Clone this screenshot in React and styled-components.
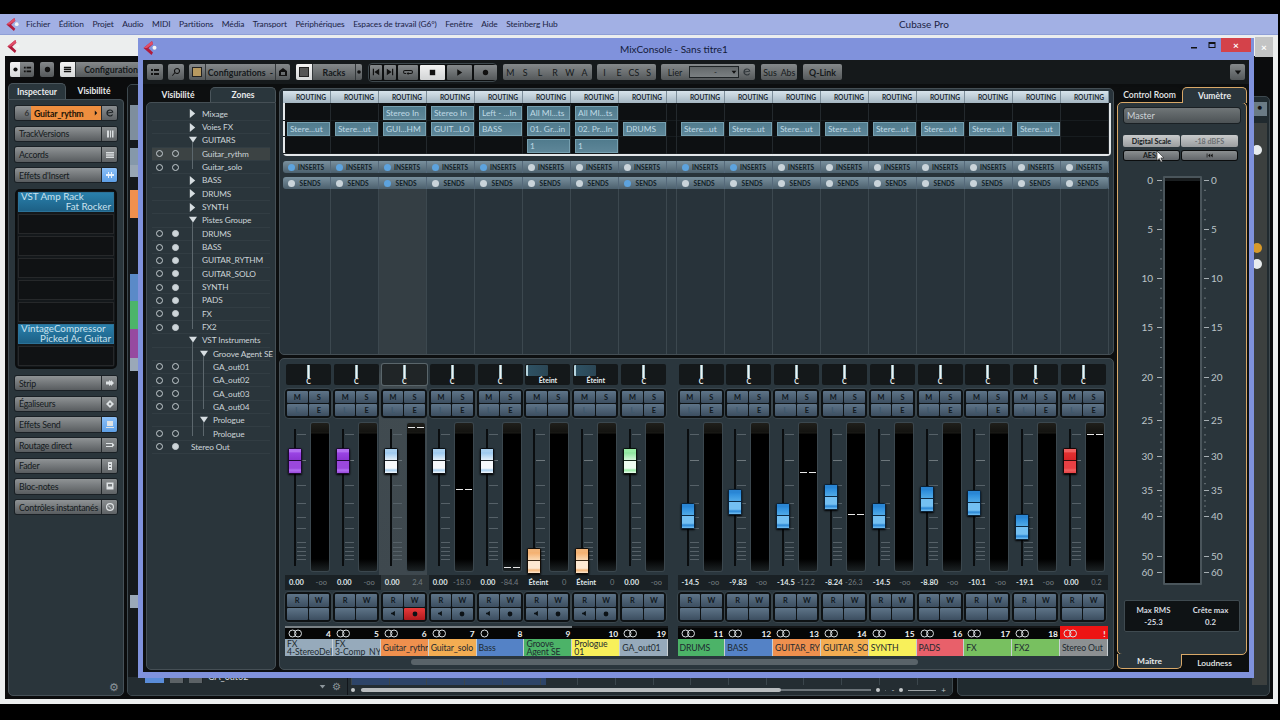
import React from "react";
import styled, { createGlobalStyle } from "styled-components";

const Global = createGlobalStyle`
  html, body { margin: 0; padding: 0; background: #000; }
  body { font-family: "Lato", "Open Sans", sans-serif; overflow: hidden; }
  * { box-sizing: border-box; }
`;

const Desktop = styled.div`position: relative; width: 1280px; height: 720px; background: #000; overflow: hidden;`;

/* ---------- icons ---------- */
const Logo = ({ size = 16 }) => (
  <svg width={size} height={size} viewBox="0 0 16 16">
    <path d="M10 1 L1.5 8 L9.5 15 L11 12.5 L6.5 8.2 L11 4 Z" fill="#b01b3c" />
    <path d="M10 1 L1.5 8 L5 8 L11 4 Z" fill="#e0506a" />
    <circle cx="12.5" cy="7.7" r="2" fill="#f4f4f4" />
  </svg>
);
const Glyph = ({ d, w = 10, h = 10, color = "#111", sw = 0, fill }) => (
  <svg width={w} height={h} viewBox="0 0 10 10">
    <path d={d} fill={fill === undefined ? color : fill} stroke={sw ? color : "none"} strokeWidth={sw} />
  </svg>
);
const G = {
  list: "M1 2h2v2H1zM4 2h5v2H4zM1 6h2v2H1zM4 6h5v2H4z",
  prev: "M1 1h1.5v8H1zM9 1v8L3 5z",
  next: "M9 1H7.5v8H9zM1 1v8l6-4z",
  stop: "M2 2h6v6H2z",
  play: "M2.5 1.5v7L8 5z",
  rec: "M5 2a3 3 0 1 0 0 6a3 3 0 1 0 0-6z",
  speaker: "M7 1.5v7L3 6H1.5V4H3z",
  down: "M1 3h8L5 8z",
  right: "M3 1v8l4-4z",
  lines: "M1 2h8v1.5H1zM1 4.3h8v1.5H1zM1 6.6h8v1.5H1z",
  note: "M1.5 1.5h7v7h-7zM3 3v2.5h4V3z",
  arrow: "M1 3h6v1H1zM1 6h6v1H1zM7 2.5 9.5 5 7 7.5z",
};
const LinkMark = ({ single, color = "#d8dde0" }) => (
  <svg width="16" height="9" viewBox="0 0 16 9">
    <circle cx="4.5" cy="4.5" r="3.5" fill="none" stroke={color} strokeWidth="1" />
    {!single && <circle cx="10" cy="4.5" r="3.5" fill="none" stroke={color} strokeWidth="1" />}
  </svg>
);

/* ---------- main Cubase window (behind) ---------- */
const MainWindow = styled.div`
  position: absolute; left: 0; top: 14px; width: 1278px; height: 690px;
  display: flex; flex-direction: column; background: #eceeee;
`;
const MenuBar = styled.div`
  height: 21px; background: #a2b0e4; display: flex; align-items: center; padding-left: 5px;
  color: #1b2344; font-size: 8.4px; letter-spacing: -0.1px; border-bottom: 1px solid #8f9fd6; white-space: nowrap; flex: none;
`;
const MenuItems = styled.div`display: flex; gap: 8.55px; margin-left: 6px; flex: none; width: 600px;`;
const AppTitle = styled.div`margin-left: 273px; font-size: 10px; letter-spacing: 0; color: #1b2344;`;
const TitleRow = styled.div`
  height: 21px; padding: 2px 0 0 6px; display: flex; align-items: center; justify-content: flex-end; position: relative; flex: none;
  & > :first-child { margin-right: auto; }
`;
const GrayClose = styled.div`
  width: 18px; height: 20px; background: #c3c4c4; color: #fff; font-size: 10px; font-weight: 700;
  display: flex; align-items: center; margin-right: 5px; justify-content: center;
`;
const WindowBody = styled.div`
  flex: 1; margin: 0 5px 5px 5px; background: #0b0c0d; display: flex; flex-direction: column; padding: 0 3px 3px 3px; min-height: 0;
`;
const MainToolbar = styled.div`
  height: 27px; display: flex; align-items: center; gap: 6px; padding-left: 2px; flex: none;
`;
const MainColumns = styled.div`flex: 1; display: flex; gap: 3px; min-height: 0;`;
const InspectorCol = styled.div`width: 116px; flex: none; display: flex; flex-direction: column;`;
const OuterTabs = styled.div`display: flex; height: ${p => p.$h}px; flex: none;`;
const OuterTab = styled.div`
  width: ${p => p.$w}px; display: flex; align-items: center; justify-content: center;
  font-size: 8.5px; font-weight: 700; color: #e8eaeb; border-radius: 5px 5px 0 0;
  background: ${p => (p.$on ? "#2a363c" : "transparent")};
  border: ${p => (p.$on ? "1px solid #4a555b" : "none")}; border-bottom: none;
`;
const InspectorPanel = styled.div`
  flex: 1; background: #2a353b; border: 1px solid #465158; border-radius: 0 4px 5px 5px;
  padding: 6px 6px 5px; display: flex; flex-direction: column; position: relative;
`;
const InspRow = styled.div`
  height: 14.4px; margin-bottom: ${p => p.$gap ?? 6.27}px; display: flex; border-radius: 2px; overflow: hidden; flex: none;
  background: linear-gradient(#8f9395, #585c5f); box-shadow: 0 0 0 1px #1a2025;
  font-size: 8.8px; letter-spacing: -0.22px; color: #141a1d; align-items: stretch;
`;
const InspLabel = styled.div`flex: 1; padding-left: 4px; display: flex; align-items: center; white-space: nowrap; min-width: 0;`;
const InspIcon = styled.div`
  width: 16px; flex: none; border-left: 1px solid #24292c; display: flex; align-items: center; justify-content: center;
  background: ${p => (p.$on ? "linear-gradient(#8cc0f8,#5d9fe6)" : "linear-gradient(#8a8e90,#5e6265)")};
`;
const TrackNum = styled.div`width: 16px; font-size: 8px; font-weight: 700; display: flex; align-items: center; justify-content: flex-end; padding-right: 2px; color: #333;`;
const TrackName = styled.div`
  flex: 1; background: #ee8e3f; font-weight: 700; display: flex; align-items: center; justify-content: space-between; padding: 0 2px 0 3px; color: #1c1206;
`;
const Slots = styled.div`
  margin: 8.6px 2px 9px; background: #14181b; border-radius: 3px; padding: 1px; display: flex; flex-direction: column; gap: 2px; flex: none; box-shadow: 0 0 0 2px #0b0d0e;
`;
const Slot = styled.div`
  height: 20px; display: flex; flex-direction: column; padding: 0 3px; font-size: 9.8px; line-height: 9.8px; color: #c9e2ef; justify-content: center;
  background: ${p => (p.$on ? "linear-gradient(#2a81ad,#1c5f84)" : "#101214")};
  box-shadow: inset 0 0 0 1px ${p => (p.$on ? "#2c7298" : "#26282a")};
  & > span:last-child { text-align: right; }
`;
const GearWrap = styled.div`position: absolute; right: 4px; bottom: 3px; color: #8a9399; font-size: 11px; line-height: 11px;`;

const ProjectPanel = styled.div`
  width: 826px; flex: none; background: #20292e; border-radius: 5px; border: 1px solid #3e494f; display: flex; flex-direction: column; overflow: hidden; margin-top: 1px;
`;
const ProjectMain = styled.div`flex: 1; min-height: 0; background: #15191c; display: flex; flex-direction: column; padding: 20px 0 0 2px;`;
const Lane = styled.div`
  width: 8px; height: ${p => p.$h}px; flex: none; background: ${p => p.$c || "transparent"};
`;
const ProjectFooter = styled.div`height: 18px; flex: none; background: #242d32; display: flex; align-items: center;`;
const FooterTools = styled.div`width: 220px; flex: none; display: flex; align-items: center; gap: 6px; color: #8d969b; padding-right: 6px; font-size: 10px; border-right: 1px solid #11151a; height: 100%;`;
const TrackStub = styled.div`display: flex; align-items: flex-start; gap: 6px; margin: 0 auto 0 17px; height: 100%; overflow: hidden;`;
const StubBlue = styled.div`width: 19px; height: 6px; background: #5a8cd8; display: flex; align-items: flex-end; justify-content: center;`;
const StubBtn = styled.div`width: 13px; height: 6px; background: #5c6266; box-shadow: 1px 0 0 #1e2428;`;
const StubText = styled.div`font-size: 9px; line-height: 9px; color: #d6dadc; margin-top: -5px; white-space: nowrap;`;
const FooterRight = styled.div`flex: 1; min-width: 0; display: flex; flex-direction: column; height: 100%; padding: 0 6px 0 3px; overflow: hidden;`;
const Ruler = styled.div`
  height: 9px; margin-top: -1px; flex: none;
  background:
    repeating-linear-gradient(90deg, #3b464c 0 1px, transparent 1px 37.7px),
    linear-gradient(90deg, #2d4468 0 195px, transparent 195px);
`;
const ScrollRow = styled.div`flex: 1; display: flex; align-items: center; gap: 5px; color: #c0c6c9; font-size: 8px;`;
const ScrollTrack = styled.div`width: 510px; height: 2px; background: #6b7378; position: relative; margin-left: 1px; flex: none;`;
const ScrollThumb = styled.div`position: absolute; left: 0; top: -1px; width: 420px; height: 4px; background: #b8bcbe; border-radius: 2px;`;
const ZoomTrack = styled.div`width: 28px; height: 1px; background: #9da3a6; flex: none;`;
const SmallDot = styled.span`width: 4px; height: 4px; background: #c4c8ca; border-radius: 50%; display: inline-block; flex: none;`;
const SidePanel = styled.div`
  flex: 1; background: #202a2f; border: 1px solid #3e494f; border-radius: 5px; display: flex; flex-direction: column; align-items: flex-end; padding: 5px 2px 0 0; margin-top: 13px; margin-left: 1px;
`;
const SideBtn = styled.div`width: 14px; height: 14px; background: #6b7b85; margin-bottom: 7px; color: #111; font-size: 8px; text-align: center; flex: none;`;
const SideLane = styled.div`width: 15px; flex: 1; background: #3c403f; display: flex; flex-direction: column; align-items: flex-start; padding-top: 22px; margin-bottom: 10px;`;
const SideKnob = styled.div`
  width: 10px; height: 10px; border-radius: 50%; background: ${p => p.$c}; margin-top: ${p => p.$mt}px; flex: none;
`;

/* ---------- MixConsole window ---------- */
const MixWindow = styled.div`
  position: absolute; left: 138px; top: 38px; width: 1116px; height: 640px;
  background: #8092dc; display: flex; flex-direction: column;
`;
const MixTitle = styled.div`
  height: 22px; flex: none; display: flex; align-items: center; position: relative; padding-left: 482px;
  color: #131a3a; font-size: 10px;
`;
const MixLogo = styled.div`position: absolute; left: 4px; top: 2px;`;
const WinButtons = styled.div`position: absolute; right: 3px; top: 0; height: 14px; display: flex; align-items: center; color: #151c3c;`;
const WinGlyph = styled.div`width: 18px; display: flex; justify-content: center; align-items: center;`;
const CloseBtn = styled.div`
  width: 30px; height: 14px; background: #d4424a; color: #fff; font-size: 10px; font-weight: 700; display: flex; align-items: center; justify-content: center;
`;
const MixInner = styled.div`
  flex: 1; margin: 0 5px 6px; background: #0d0f10; display: flex; flex-direction: column; min-height: 0;
`;
const Toolbar = styled.div`height: 27px; flex: none; display: flex; align-items: flex-start; padding: 4px 4px 0 4px; background: #15191b; box-shadow: inset 0 -3px 0 #0c0e0f;`;
const ToolGroup = styled.div`
  height: ${p => p.$h || 16}px; width: ${p => p.$w}px; margin-left: ${p => p.$ml || 0}px; flex: none; display: flex; align-items: stretch; border-radius: 2px; overflow: hidden;
  background: linear-gradient(#85898b, #54585a); font-size: 8.8px; color: #15191b;
`;
const ToolCell = styled.div`
  width: ${p => (p.$w ? `${p.$w}px` : "auto")}; flex: ${p => (p.$w ? "none" : 1)}; display: flex; align-items: center; justify-content: center;
  font-weight: ${p => (p.$b ? 700 : 400)}; white-space: nowrap;
  background: ${p => (p.$light ? "linear-gradient(#f4f4f4,#d6d8d9)" : "transparent")};
  border-left: ${p => (p.$sep ? "1px solid #33383a" : "none")};
`;
const Swatch = styled.div`width: 10px; height: 10px; border: 1px solid #222; background: ${p => p.$c};`;
const TransportFrame = styled.div`
  width: 129px; margin-left: 6px; height: 19px; margin-top: -1.5px; flex: none; display: flex; gap: 2px; align-items: center; border: 1px solid #3e484d; border-radius: 4px; padding: 0 1px; background: #0d0f10;
`;
const TransBtn = styled.div`
  width: ${p => p.$w}px; height: 15px; display: flex; align-items: center; justify-content: center; flex: none;
  background: ${p => (p.$light ? "linear-gradient(#f2f2f2,#d2d4d5)" : "linear-gradient(#85898b,#54585a)")}; border-radius: 1px;
`;
const LierSelect = styled.div`
  width: 50px; flex: none; margin: 2px 0; border: 1px solid #1e2325; background: linear-gradient(#63686a,#7b8082); display: flex; align-items: center; justify-content: flex-end; padding-right: 1px; gap: 14px; font-size: 8px;
`;
const MixColumns = styled.div`
  flex: 1; display: flex; padding: 0 2px 2px 3px; gap: 3px; min-height: 0;
`;
const TreeCol = styled.div`width: 130px; flex: none; display: flex; flex-direction: column;`;
const TreePanel = styled.div`
  flex: 1; background: #2a353b; border: 1px solid #454f55; border-radius: 0 0 5px 5px; border-top-left-radius: 5px; padding: 4.6px 5px 0 5px;
`;
const TreeRow = styled.div`
  height: 13.33px; display: flex; align-items: stretch; font-size: 8.3px; letter-spacing: -0.12px; color: #ccd4d8;
  border-bottom: 1px solid #323d43;
  background: ${p => (p.$sel ? "#3c4344" : "transparent")}; white-space: nowrap;
`;
const DotCell = styled.div`width: 35px; flex: none; display: flex; align-items: center; gap: 9px; padding-left: 4px;`;
const TreeDot = styled.span`
  width: 7px; height: 7px; border-radius: 50%; flex: none;
  border: 1px solid #c4ccd0; background: ${p => (p.$on ? "#cdd5d9" : "transparent")};
`;
const Indent = styled.div`
  width: 11px; flex: none; position: relative; display: flex; align-items: center; justify-content: center;
  &::before { content: ""; display: ${p => (p.$line ? "block" : "none")}; position: absolute; left: 5px; top: ${p => (p.$first ? "8px" : "-1px")}; bottom: ${p => (p.$last ? "4px" : "-1px")}; width: 1px; background: #5c676d; }
`;
const TreeLabel = styled.div`margin-left: 4px; display: flex; align-items: center;`;

const CenterCol = styled.div`width: 835px; flex: none; display: flex; flex-direction: column; gap: 3px; padding-top: 1px;`;
const RackPanel = styled.div`
  height: 267px; flex: none; background: #28333a; border: 1px solid #454f55; border-radius: 5px; padding: 2px 0 0 3px; display: flex; flex-direction: column; overflow: hidden;
`;
const Band = styled.div`
  display: grid; grid-template-columns: repeat(8, 48px) 10px repeat(9, 48px); flex: none;
  height: ${p => p.$h}px; margin-top: ${p => p.$mt || 0}px;
`;
const HeadCell = styled.div`
  background: linear-gradient(#d8e4ec, #a4b6c2); font-size: 6.6px; font-weight: 700; color: #1c2a33; display: flex; align-items: center; justify-content: center; padding-left: 9px;
  border-right: 1px solid #7d8e9a;
`;
const RoutingBody = styled.div`
  flex: none; width: 828px; background: #0d1012; border: 2px solid #e4e8ea; border-top: none; border-radius: 0 0 4px 4px; height: 53px; padding-top: 1px;
  display: flex; flex-direction: column;
`;
const RoutingBand = styled(Band)`height: 16.5px; margin-left: -2px; border-bottom: 1px solid #171c1f;`;
const RoutingCellWrap = styled.div`border-right: 1px solid #23292d; padding: 1.5px 1px 1px 4px;`;
const RoutingCell = styled.div`
  height: 14px; width: 43px; background: linear-gradient(#4f7a8c, #5f8799); box-shadow: inset 0 0 0 1px #76a0b0; color: #bfd9e4; font-size: 8.4px;
  display: flex; align-items: center; padding-left: 3px; white-space: nowrap; overflow: hidden;
`;
const PillBand = styled(Band)`
  background: linear-gradient(#79909e, #4c606d); border-radius: 3px; width: 826px;
`;
const PillCell = styled.div`
  display: flex; align-items: center; gap: 3px; padding-left: 5px; font-size: 6.6px; font-weight: 700; color: #101c24;
  border-right: 1px solid #55697a;
`;
const Led = styled.span`width: 7px; height: 7px; border-radius: 50%; flex: none; background: ${p => (p.$on ? "#5da3de" : "#cad4da")};`;
const RackColumns = styled(Band)`flex: 1; height: auto; margin-top: 0;`;
const RackColumn = styled.div`
  background: ${p => (p.$sel ? "#343e44" : "transparent")}; border-right: 1px solid #3c484f;
`;

const MixerPanel = styled.div`
  flex: 1; background: #2a363d; border: 1px solid #454f55; border-radius: 5px; padding: 4px 0 0 3px; display: flex; flex-direction: column; min-height: 0;
`;
const Strips = styled.div`display: grid; grid-template-columns: repeat(8, 47.9px) 9.4px repeat(9, 47.8px);`;
const Strip = styled.div`display: flex; flex-direction: column; background: ${p => (p.$sel ? "linear-gradient(#2e393f 0, #414b50 6%, #3e484e 100%)" : "transparent")}; background-size: 100% 212px; background-repeat: no-repeat;`;
const PanBox = styled.div`
  height: 21px; margin: 1px 0 0 3px; width: 45px; flex: none; background: ${p => (p.$sel ? "#202527" : "#14181a")}; border-radius: 2px; position: relative; display: flex; flex-direction: column; align-items: center;
  box-shadow: ${p => (p.$sel ? "0 0 0 1px #5a666b" : "none")};
`;
const PanTick = styled.div`width: 3px; height: 13px; margin-top: 1px; background: linear-gradient(90deg, #7fa4ad, #eef4f5 50%, #7fa4ad); flex: none;`;
const PanText = styled.div`font-size: 7px; font-weight: 700; color: #e6ecee; line-height: 7px; margin-top: ${p => p.$mt || 0}px;`;
const PanBar = styled.div`position: absolute; left: 1px; top: 1px; width: 22px; height: 11px; background: linear-gradient(90deg, #b6d4de 0 2px, #2e5264 2px, #2b4655); border-radius: 1px;`;
const BtnBox = styled.div`
  width: 46px; height: ${p => p.$h}px; margin: ${p => p.$mt}px 0 0 2px; flex: none; display: grid; grid-template-columns: 1fr 1fr; grid-template-rows: 1fr 1fr; gap: 1px;
  padding: 2px; background: #0e1214; border-radius: 4px; box-shadow: 0 0 0 1px #3a464d;
`;
const MiniBtn = styled.div`
  background: ${p => (p.$red ? "linear-gradient(#e83a3a,#b01a1e)" : "linear-gradient(#5e7488,#3c4e60)")}; border-radius: 1px; color: ${p => (p.$dim ? "#3f586c" : "#10181e")};
  font-size: 7.4px; font-weight: 700; display: flex; align-items: center; justify-content: center;
`;
const FaderArea = styled.div`height: 152px; margin-top: 3px; flex: none; display: flex; position: relative;`;
const FaderTrack = styled.div`width: 28px; flex: none; position: relative;`;
const Handle = styled.div`
  position: absolute; left: 5px; width: 14px; height: 26px; border-radius: 1.5px;
  border: 1px solid ${p => p.$edge}; box-shadow: 0 1px 2px #000;
  background: linear-gradient(${p => p.$a} 0, ${p => p.$a} 12%, ${p => p.$b} 16%, ${p => p.$c} 48%, ${p => p.$d} 52%, ${p => p.$d} 80%, ${p => p.$a} 88%, ${p => p.$d} 100%);
  &::after { content: ""; position: absolute; left: 0; right: 0; top: 11px; height: 1px; background: ${p => p.$line}; }
`;
const Meter = styled.div`
  width: 18px; margin-top: 2px; height: 148px; flex: none; position: relative; border-radius: 2px; box-shadow: 0 0 0 1px #3b474e;
  background: linear-gradient(#201f1b 0, #131310 9px, #1c1c18 10px, #000 11px, #000 136px, #1c2224 100%);
`;
const Peak = styled.div`
  position: absolute; left: 1px; right: 1px; height: 1px;
  background: linear-gradient(90deg, #e8e8e8 0 45%, transparent 45% 55%, #e8e8e8 55% 100%);
`;
const ValueRow = styled.div`
  height: 15px; margin: 2px -2px 0 2px; flex: none; background: ${p => (p.$sel ? "#2e363a" : "#1a2125")}; display: flex; align-items: center; justify-content: space-between; padding: 0 4px; font-size: 7.5px; white-space: nowrap;
`;
const ValMain = styled.span`font-weight: 700; color: #dfe4e6;`;
const ValPeak = styled.span`color: #737c80; padding-right: 2px;`;
const LabelRow = styled.div`
  height: 13px; margin: 4px -2px 0 2px; flex: none; background: ${p => (p.$red ? "#ee1414" : "#050606")}; display: flex; align-items: center; justify-content: space-between; padding: 0 2px 0 3px;
  border-top: 2px solid ${p => (p.$line ? "#7a8286" : p.$red ? "#ee1414" : "#141618")}; color: #eef1f2; font-size: 8.4px; font-weight: 700;
`;
const NameCell = styled.div`
  height: 17px; margin: 0 -2px 0 2px; flex: none; background: ${p => p.$c}; color: #1e2a30; font-size: 8.7px; letter-spacing: -0.1px; line-height: 8px; padding: ${p => (p.$two ? "1px 0 0 2px" : "0 0 0 2px")};
  display: flex; align-items: ${p => (p.$two ? "flex-start" : "center")}; overflow: hidden; white-space: pre; border-right: 1px solid #c9d0d4;
`;
const HScroll = styled.div`
  height: 6px; width: 507px; margin: 3px 0 0 128px; background: #596369; border-radius: 3px; flex: none;
`;

const RightCol = styled.div`width: 130px; flex: none; display: flex; flex-direction: column;`;
const RTabs = styled.div`display: flex; height: 15px; flex: none; position: relative; z-index: 1;`;
const RTab = styled.div`
  width: 65px; height: ${p => (p.$on ? "16px" : "15px")}; display: flex; align-items: center; justify-content: center; font-size: 8.6px; font-weight: ${p => (p.$on ? 700 : 600)}; color: #e6e9ea;
  background: ${p => (p.$on ? "#2a353b" : "#0d0f10")};
  border: ${p => (p.$on ? "1px solid #d8a868" : "none")}; border-bottom: none; border-radius: 5px 5px 0 0;
`;
const RBottomTabs = styled.div`display: flex; height: 15px; flex: none; position: relative; z-index: 1;`;
const RBottomTab = styled.div`
  width: 65px; height: 15px; margin-top: ${p => (p.$on ? "-1px" : "0")}; display: flex; align-items: center; justify-content: center; font-size: 8.4px; font-weight: ${p => (p.$on ? 700 : 600)}; color: #e6e9ea;
  background: ${p => (p.$on ? "#2a353b" : "#0d0f10")};
  border: ${p => (p.$on ? "1px solid #d8a868" : "none")}; border-top: none; border-radius: 0 0 5px 5px;
`;
const VuPanel = styled.div`
  flex: 1; background: #2a353b; border: 1px solid #d8a868; border-radius: 5px; display: flex; flex-direction: column; padding: 5px 5px 0; position: relative;
`;
const MasterField = styled.div`
  height: 15px; flex: none; margin: 0 1px; border-radius: 3px; background: linear-gradient(#6f7577, #4c5255); box-shadow: 0 0 0 1px #1a2024; color: #cdd3d6; font-size: 9px; display: flex; align-items: center; padding-left: 3px;
`;
const VuBtnRow = styled.div`display: flex; gap: ${p => p.$gap}px; margin-top: ${p => p.$mt}px; height: ${p => p.$h}px; flex: none; margin-left: ${p => p.$ml || 0}px;`;
const VuBtn = styled.div`
  width: ${p => p.$w}px; flex: none; border-radius: 2px; display: flex; align-items: center; justify-content: center; font-size: 7.2px; font-weight: 700;
  background: ${p => (p.$bright ? "linear-gradient(#c8cacb,#9a9d9f)" : "linear-gradient(#8a8e90,#62666a)")};
  color: ${p => (p.$faint ? "#6c7073" : "#15191b")}; box-shadow: ${p => (p.$dark ? "0 0 0 1px #0b0d0e" : "none")}; position: relative;
`;
const Cursor = styled.div`position: absolute; left: 32px; top: -1px; z-index: 2; line-height: 0;`;
const ScaleArea = styled.div`height: 420px; margin: 10px -5px 0; flex: none; position: relative;`;
const MeterBox = styled.div`
  position: absolute; left: 45px; top: 6px; width: 39px; height: 409px; background: #000; border: 2px solid #4a555b;
  border-radius: 1px; box-shadow: inset 0 3px 0 #1a1e20;
`;
const ScaleNum = styled.div`
  position: absolute; font-size: 10px; line-height: 10px; color: #bcc4c8; transform: translateY(-50%);
  ${p => (p.$left ? "right: 93px; text-align: right;" : "left: 93px;")}
`;
const RmsBox = styled.div`
  height: 32px; margin: 10px 1px 0; flex: none; background: #0f1315; border: 1px solid #3f4a50; border-radius: 2px; display: grid; grid-template-columns: 1fr 1fr; text-align: center; align-content: center; font-size: 7.8px; font-weight: 700; color: #d8dde0; line-height: 12.5px;
`;

/* ---------- data ---------- */
const menu = ["Fichier", "Édition", "Projet", "Audio", "MIDI", "Partitions", "Média", "Transport", "Périphériques", "Espaces de travail (G6°)", "Fenêtre", "Aide", "Steinberg Hub"];

const tree = [
  { t: "Mixage", d: 1, k: "closed" },
  { t: "Voies FX", d: 1, k: "closed" },
  { t: "GUITARS", d: 1, k: "open", l: [0], first: true },
  { t: "Guitar_rythm", dots: [0, 0], d: 1, sel: true, l: [0] },
  { t: "Guitar_solo", dots: [0, 0], d: 1, l: [0], last: true },
  { t: "BASS", d: 1, k: "closed" },
  { t: "DRUMS", d: 1, k: "closed" },
  { t: "SYNTH", d: 1, k: "closed" },
  { t: "Pistes Groupe", d: 1, k: "open", l: [0], first: true },
  { t: "DRUMS", dots: [0, 1], d: 1, l: [0] },
  { t: "BASS", dots: [0, 1], d: 1, l: [0] },
  { t: "GUITAR_RYTHM", dots: [0, 1], d: 1, l: [0] },
  { t: "GUITAR_SOLO", dots: [0, 1], d: 1, l: [0] },
  { t: "SYNTH", dots: [0, 1], d: 1, l: [0] },
  { t: "PADS", dots: [0, 1], d: 1, l: [0] },
  { t: "FX", dots: [0, 1], d: 1, l: [0] },
  { t: "FX2", dots: [0, 1], d: 1, l: [0], last: true },
  { t: "VST Instruments", d: 1, k: "open", l: [0], first: true },
  { t: "Groove Agent SE", d: 2, k: "open", l: [0, 1], firstIn: 1 },
  { t: "GA_out01", dots: [0, 0], d: 2, l: [0, 1] },
  { t: "GA_out02", dots: [0, 0], d: 2, l: [0, 1] },
  { t: "GA_out03", dots: [0, 0], d: 2, l: [0, 1] },
  { t: "GA_out04", dots: [0, 0], d: 2, l: [0, 1], lastIn: 1 },
  { t: "Prologue", d: 2, k: "open", l: [0, 1], firstIn: 1 },
  { t: "Prologue", dots: [0, 0], d: 2, l: [0, 1], lastIn: 1, last: true },
  { t: "Stereo Out", dots: [0, 1], d: 0 },
];

const WHITE = { a: "#a8cfef", b: "#9cc8ee", c: "#e8f2fa", d: "#f6f8fa", edge: "#0a0e12", line: "#22282c" };
const BLUE = { a: "#2a86d4", b: "#2e8edc", c: "#52ace8", d: "#74c0f2", edge: "#0a2238", line: "#0c2a44" };
const PURPLE = { a: "#b26ef0", b: "#9a44e4", c: "#8a34d0", d: "#9a48dc", edge: "#1c0a30", line: "#1c0a30" };
const ORANGE = { a: "#f2b478", b: "#f4b070", c: "#fbdcb8", d: "#fde8d2", edge: "#120c06", line: "#3a2a1a" };
const GREEN = { a: "#98eca6", b: "#8ee49e", c: "#d8f8dc", d: "#eefcf0", edge: "#0a120c", line: "#1a2a1e" };
const RED = { a: "#f06060", b: "#e23030", c: "#d82428", d: "#e84044", edge: "#1a0606", line: "#3a0c0c" };

const strips = [
  { n: 4, name: "FX\n4-StereoDel", c: "#96aabb", top: 27, h: PURPLE, v: "0.00", p: "-oo", line: 1 },
  { n: 5, name: "FX\n3-Comp_NY", c: "#96aabb", top: 27, h: PURPLE, v: "0.00", p: "-oo", line: 1 },
  { n: 6, name: "Guitar_rythr", c: "#ef904e", top: 27, h: WHITE, v: "0.00", p: "2.4", sel: 1, mon: 1, rec: 1, peak: 4, line: 1 },
  { n: 7, name: "Guitar_solo", c: "#f3ad52", top: 27, h: WHITE, v: "0.00", p: "-18.0", mon: 1, peak: 66, line: 1 },
  { n: 8, name: "Bass", c: "#5482c6", top: 27, h: WHITE, v: "0.00", p: "-84.4", mon: 1, peak: 144, line: 1, single: 1 },
  { n: 9, name: "Groove\nAgent SE", c: "#4cb368", top: 127, h: ORANGE, v: "Éteint", p: "0", off: 1, mon: 1, line: 1, nolink: 1 },
  { n: 10, name: "Prologue\n01", c: "#f8f05a", top: 127, h: ORANGE, v: "Éteint", p: "0", off: 1, mon: 1, nolink: 1 },
  { n: 19, name: "GA_out01", c: "#96aabb", top: 27, h: GREEN, v: "0.00", p: "-oo" },
  { n: 11, name: "DRUMS", c: "#4cb368", top: 82, h: BLUE, v: "-14.5", p: "-oo" },
  { n: 12, name: "BASS", c: "#5482c6", top: 68, h: BLUE, v: "-9.83", p: "-oo" },
  { n: 13, name: "GUITAR_RY", c: "#ef904e", top: 82, h: BLUE, v: "-14.5", p: "-12.2", peak: 49 },
  { n: 14, name: "GUITAR_SOl", c: "#f3ad52", top: 63, h: BLUE, v: "-8.24", p: "-26.3", peak: 91 },
  { n: 15, name: "SYNTH", c: "#f8f05a", top: 82, h: BLUE, v: "-14.5", p: "-oo" },
  { n: 16, name: "PADS", c: "#e8606a", top: 65, h: BLUE, v: "-8.80", p: "-oo" },
  { n: 17, name: "FX", c: "#78c060", top: 69, h: BLUE, v: "-10.1", p: "-oo" },
  { n: 18, name: "FX2", c: "#78c060", top: 93, h: BLUE, v: "-19.1", p: "-oo" },
  { n: "!", name: "Stereo Out", c: "#8c9092", top: 27, h: RED, v: "0.00", p: "0.2", peak: 11, red: 1 },
];

const row1 = ["", "", "Stereo In", "Stereo In", "Left - ...In", "All MI...ts", "All MI...ts", ""];
const row2 = ["Stere...ut", "Stere...ut", "GUI...HM", "GUIT...LO", "BASS", "01. Gr...in", "02. Pr...In", "DRUMS", "Stere...ut", "Stere...ut", "Stere...ut", "Stere...ut", "Stere...ut", "Stere...ut", "Stere...ut", "Stere...ut", ""];
const row3 = ["", "", "", "", "", "1", "1"];
const insertLeds = [1, 1, 1, 1, 1, 0, 0, 0, 1, 1, 0, 0, 0, 0, 0, 0, 0];
const sendLeds = [0, 0, 1, 0, 0, 0, 0, 1, 0, 0, 0, 0, 0, 0, 0, 0, 0];

const vuScale = [[0, 180], [5, 229], [10, 278], [15, 327], [20, 377], [25, 420], [30, 456], [35, 490], [40, 516], [50, 556], [60, 572]];

const faderTicks = [13, 39, 64, 82, 96, 107, 121, 126, 130, 134, 138];

/* helper: lays 17 cells out with the gap between channel groups */
const withGap = (render, gap) => {
  const out = [];
  strips.forEach((s, i) => {
    if (i === 8) out.push(gap("gap"));
    out.push(render(s, i));
  });
  return out;
};

const Scale = () => (
  <svg width="28" height="152" viewBox="0 0 28 152" style={{ display: "block" }}>
    <rect x="11" y="8" width="2" height="137" fill="#0a0d0f" />
    {faderTicks.map(y => (
      <rect key={y} x="14" y={y} width="9" height="1" fill={y === 39 ? "#6d777c" : "#566168"} />
    ))}
  </svg>
);

const VuTicks = () => {
  const ticks = [];
  vuScale.forEach(([, y], i) => {
    ticks.push({ y, major: true });
    const next = vuScale[i + 1];
    if (next && i < 8) {
      for (let k = 1; k < 5; k++) ticks.push({ y: y + ((next[1] - y) * k) / 5 });
    }
  });
  return (
    <svg width="130" height="420" viewBox="0 0 130 420" style={{ position: "absolute", left: 0, top: 0 }}>
      {ticks.map((t, i) => (
        <g key={i} fill={t.major ? "#a6aeb2" : "#6b757a"}>
          <rect x={t.major ? 39 : 42} y={t.y - 170} width={t.major ? 5 : 2} height="1" />
          <rect x="86" y={t.y - 170} width={t.major ? 5 : 2} height="1" />
        </g>
      ))}
    </svg>
  );
};

const inspTop = [
  { t: "TrackVersions", i: "M2 1.5h2v7H2zM5 1.5h1v7H5zM7 1.5h1.5v7H7z" },
  { t: "Accords", i: G.lines },
];
const inspBottom = [
  { t: "Strip", i: "M1 3.5h3V2l2 1.5V2l3 3-3 3V6.5L4 8V6.5H1z" },
  { t: "Égaliseurs", i: "M5 1l4 4-4 4-4-4zM5 3.5 3.5 5 5 6.5 6.5 5z" },
  { t: "Effets Send", i: "M2 2h6v5H2zM1 8h8v1H1z", on: true },
  { t: "Routage direct", i: G.arrow },
  { t: "Fader", i: "M3 1h4v8H3zM4 3v1h2V3zM4 6v1h2V6z" },
  { t: "Bloc-notes", i: G.note },
  { t: "Contrôles instantanés", i: "M5 1a4 4 0 1 0 0 8a4 4 0 1 0 0-8zM5 2.2a2.8 2.8 0 1 1 0 5.6a2.8 2.8 0 1 1 0-5.6zM3.6 3.4l3 2.8-.6.6-3-2.8z" },
];

export default function App() {
  return (
    <Desktop>
      <Global />
      <MainWindow>
        <MenuBar>
          <Logo size={15} />
          <MenuItems>{menu.map(m => <span key={m}>{m}</span>)}</MenuItems>
          <AppTitle>Cubase Pro</AppTitle>
        </MenuBar>
        <TitleRow>
          <Logo size={15} />
          <GrayClose>×</GrayClose>
        </TitleRow>
        <WindowBody>
          <MainToolbar>
            <ToolGroup $w={24} $h={15}>
              <ToolCell $light $w={10}><Glyph d={G.rec} w={7} h={7} /></ToolCell>
              <ToolCell><Glyph d={G.list} w={9} h={9} /></ToolCell>
            </ToolGroup>
            <ToolGroup $w={14} $h={15}><ToolCell><Glyph d={G.rec} w={9} h={9} /></ToolCell></ToolGroup>
            <ToolGroup $w={90} $h={15}>
              <ToolCell $w={15} $light><Glyph d={G.lines} w={9} h={9} /></ToolCell>
              <ToolCell $b $sep>Configurations</ToolCell>
            </ToolGroup>
          </MainToolbar>
          <MainColumns>
            <InspectorCol>
              <OuterTabs $h={16}>
                <OuterTab $w={58} $on>Inspecteur</OuterTab>
                <OuterTab $w={56}>Visibilité</OuterTab>
              </OuterTabs>
              <InspectorPanel>
                <InspRow>
                  <TrackNum>6</TrackNum>
                  <TrackName>Guitar_rythm <Glyph d={G.right} w={6} h={6} /></TrackName>
                  <InspIcon><Glyph d="M5 1.5a3.5 3.5 0 1 0 3 5.2l-.8-.4A2.6 2.6 0 0 1 2.6 5.5L8.4 4.4A3.5 3.5 0 0 0 5 1.5zM5 2.5c1 0 1.8.5 2.2 1.2L2.7 4.5A2.6 2.6 0 0 1 5 2.5z" color="#1c2124" /></InspIcon>
                </InspRow>
                {inspTop.map(r => (
                  <InspRow key={r.t}><InspLabel>{r.t}</InspLabel><InspIcon><Glyph d={r.i} color="#d8dcde" /></InspIcon></InspRow>
                ))}
                <InspRow $gap={0}>
                  <InspLabel>Effets d'Insert</InspLabel>
                  <InspIcon $on><Glyph d="M1 4h8v2H1zM3 2h1v6H3zM6 2h1v6H6z" color="#e8f2fc" /></InspIcon>
                </InspRow>
                <Slots>
                  <Slot $on><span>VST Amp Rack</span><span>Fat Rocker</span></Slot>
                  <Slot /><Slot /><Slot /><Slot /><Slot />
                  <Slot $on><span>VintageCompressor</span><span>Picked Ac Guitar</span></Slot>
                  <Slot />
                </Slots>
                {inspBottom.map(r => (
                  <InspRow key={r.t}>
                    <InspLabel>{r.t}</InspLabel>
                    <InspIcon $on={r.on}><Glyph d={r.i} color="#dfe3e5" /></InspIcon>
                  </InspRow>
                ))}
                <GearWrap>⚙</GearWrap>
              </InspectorPanel>
            </InspectorCol>
            <ProjectPanel>
              <ProjectMain>
                <Lane $h={35} $c="#7e8e9e" />
                <Lane $h={8} />
                <Lane $h={17} $c="#8598aa" />
                <Lane $h={12} $c="#98a6b4" />
                <Lane $h={13} />
                <Lane $h={28} $c="#ef904e" />
                <Lane $h={56} />
                <Lane $h={27} $c="#5a8ac8" />
                <Lane $h={28} $c="#4cb46a" />
                <Lane $h={29} $c="#964aa0" />
                <Lane $h={13} $c="#9aa8b8" />
                <Lane $h={224} />
                <Lane $h={13} $c="#9aa8b8" />
              </ProjectMain>
              <ProjectFooter>
                <FooterTools>
                  <TrackStub>
                    <StubBlue />
                    <StubBtn />
                    <StubBtn />
                    <StubText>GA_out02</StubText>
                  </TrackStub>
                  <Glyph d={G.down} w={7} h={7} color="#8d969b" /><span>⚙</span>
                </FooterTools>
                <FooterRight>
                  <Ruler />
                  <ScrollRow>
                    <SmallDot />
                    <ScrollTrack><ScrollThumb /></ScrollTrack>
                    <SmallDot />
                    <Glyph d={G.down} w={7} h={7} color="#c0c6c9" />
                    <span>-</span>
                    <SmallDot />
                    <ZoomTrack />
                    <span>+</span>
                  </ScrollRow>
                </FooterRight>
              </ProjectFooter>
            </ProjectPanel>
            <SidePanel>
              <SideBtn>●</SideBtn>
              <SideLane>
                <SideKnob $c="#e8ecee" $mt={0} />
                <SideKnob $c="#d89a2a" $mt={88} />
                <SideKnob $c="#e8ecee" $mt={6} />
              </SideLane>
            </SidePanel>
          </MainColumns>
        </WindowBody>
      </MainWindow>

      <MixWindow>
        <MixTitle>
          <MixLogo><Logo size={16} /></MixLogo>
          MixConsole - Sans titre1
          <WinButtons>
            <WinGlyph><Glyph d="M2 7h6v1.5H2z" /></WinGlyph>
            <WinGlyph><Glyph d="M1.5 2h7v6h-7zM2.5 4v3h5V4z" /></WinGlyph>
            <CloseBtn>×</CloseBtn>
          </WinButtons>
        </MixTitle>
        <MixInner>
          <Toolbar>
            <ToolGroup $w={16}><ToolCell><Glyph d={G.list} /></ToolCell></ToolGroup>
            <ToolGroup $w={16} $ml={5}><ToolCell><Glyph d="M6 1a3 3 0 1 1-2 5.2L1.6 9 1 8.4 3.4 5.6A3 3 0 0 1 6 1zM6 2a2 2 0 1 0 0 4a2 2 0 1 0 0-4z" /></ToolCell></ToolGroup>
            <ToolGroup $w={101} $ml={5}>
              <ToolCell $w={16}><Swatch $c="#b89a60" /></ToolCell>
              <ToolCell $b $sep>Configurations&nbsp;&nbsp;-</ToolCell>
              <ToolCell $w={15} $sep><Glyph d="M5 1l4 3v5H1V4zM3 5v3h4V5z" /></ToolCell>
            </ToolGroup>
            <ToolGroup $w={66} $ml={6}>
              <ToolCell $w={16} $light><Swatch $c="#555" /></ToolCell>
              <ToolCell $b $sep>Racks</ToolCell>
              <ToolCell $w={7} $sep><Glyph d={G.rec} w={6} h={6} /></ToolCell>
            </ToolGroup>
            <TransportFrame>
              <TransBtn $w={12}><Glyph d={G.prev} w={8} h={8} /></TransBtn>
              <TransBtn $w={12}><Glyph d={G.next} w={8} h={8} /></TransBtn>
              <TransBtn $w={20}><Glyph d="M2 3h6a2 2 0 0 1 0 4H5.5V8L3.5 6.5 5.5 5v1H8a1 1 0 0 0 0-2H2a1 1 0 0 0 0 2h1v1H2a2 2 0 0 1 0-4z" w={12} h={10} /></TransBtn>
              <TransBtn $w={25} $light><Glyph d={G.stop} w={9} h={9} /></TransBtn>
              <TransBtn $w={25}><Glyph d={G.play} w={9} h={9} /></TransBtn>
              <TransBtn $w={23}><Glyph d={G.rec} w={9} h={9} /></TransBtn>
            </TransportFrame>
            <ToolGroup $w={89} $ml={6}>
              {["M", "S", "L", "R", "W", "A"].map(x => <ToolCell key={x}>{x}</ToolCell>)}
            </ToolGroup>
            <ToolGroup $w={59} $ml={5}>
              {["I", "E", "CS", "S"].map(x => <ToolCell key={x}>{x}</ToolCell>)}
            </ToolGroup>
            <ToolGroup $w={94} $ml={5}>
              <ToolCell $w={28}>Lier</ToolCell>
              <LierSelect><span>-</span><Glyph d={G.down} w={6} h={6} /></LierSelect>
              <ToolCell><Glyph d="M5 1.5a3.5 3.5 0 1 0 3 5.2l-.8-.4A2.6 2.6 0 0 1 2.6 5.5L8.4 4.4A3.5 3.5 0 0 0 5 1.5zM5 2.5c1 0 1.8.5 2.2 1.2L2.7 4.5A2.6 2.6 0 0 1 5 2.5z" color="#30363a" /></ToolCell>
            </ToolGroup>
            <ToolGroup $w={36} $ml={6}>
              <ToolCell>Sus</ToolCell><ToolCell>Abs</ToolCell>
            </ToolGroup>
            <ToolGroup $w={39} $ml={6}><ToolCell $b>Q-Link</ToolCell></ToolGroup>
            <ToolGroup $w={15} $ml={388}><ToolCell><Glyph d={G.down} w={8} h={8} /></ToolCell></ToolGroup>
          </Toolbar>
          <MixColumns>
            <TreeCol>
              <OuterTabs $h={15}>
                <OuterTab $w={64}>Visibilité</OuterTab>
                <OuterTab $w={66} $on>Zones</OuterTab>
              </OuterTabs>
              <TreePanel>
                {tree.map((r, i) => {
                  const cells = [];
                  for (let c = 0; c < r.d; c++) {
                    const isLast = c === r.d - 1;
                    cells.push(
                      <Indent
                        key={c}
                        $line={r.l && r.l.includes(c)}
                        $first={(r.first && c === 0) || r.firstIn === c}
                        $last={(r.last && c === 0) || r.lastIn === c}
                      >
                        {isLast && r.k === "open" && <Glyph d="M0 1h10L5 8z" w={10} h={8} color="#d7dee2" />}
                        {isLast && r.k === "closed" && <Glyph d="M2 0v10l6-5z" w={9} h={11} color="#d7dee2" />}
                      </Indent>
                    );
                  }
                  return (
                    <TreeRow key={i} $sel={r.sel}>
                      <DotCell>
                        {r.dots && r.dots.map((d, j) => <TreeDot key={j} $on={d} />)}
                      </DotCell>
                      {cells}
                      <TreeLabel>{r.t}</TreeLabel>
                    </TreeRow>
                  );
                })}
              </TreePanel>
            </TreeCol>
            <CenterCol>
              <RackPanel>
                <Band $h={12}>
                  {withGap(s => <HeadCell key={s.n}>ROUTING</HeadCell>, k => <HeadCell key={k} />)}
                </Band>
                <RoutingBody>
                  {[row1, row2, row3].map((row, ri) => (
                    <RoutingBand key={ri}>
                      {withGap((s, i) => (
                        <RoutingCellWrap key={s.n}>
                          {row[i] ? <RoutingCell>{row[i]}</RoutingCell> : null}
                        </RoutingCellWrap>
                      ), k => <RoutingCellWrap key={k} />)}
                    </RoutingBand>
                  ))}
                </RoutingBody>
                <PillBand $h={12} $mt={5}>
                  {withGap((s, i) => (
                    <PillCell key={s.n}><Led $on={insertLeds[i]} />INSERTS</PillCell>
                  ), k => <PillCell key={k} />)}
                </PillBand>
                <PillBand $h={12} $mt={4}>
                  {withGap((s, i) => (
                    <PillCell key={s.n}><Led $on={sendLeds[i]} />&nbsp;SENDS</PillCell>
                  ), k => <PillCell key={k} />)}
                </PillBand>
                <RackColumns>
                  {withGap((s) => <RackColumn key={s.n} $sel={s.sel} />, k => <RackColumn key={k} />)}
                </RackColumns>
              </RackPanel>
              <MixerPanel>
                <Strips>
                  {withGap(s => (
                    <Strip key={s.n} $sel={s.sel}>
                      <PanBox $sel={s.sel}>
                        {s.off ? (
                          <>
                            <PanBar />
                            <PanText $mt={13}>Éteint</PanText>
                          </>
                        ) : (
                          <>
                            <PanTick />
                            <PanText>C</PanText>
                          </>
                        )}
                      </PanBox>
                      <BtnBox $h={29} $mt={4}>
                        <MiniBtn>M</MiniBtn>
                        <MiniBtn>S</MiniBtn>
                        <MiniBtn $dim>L</MiniBtn>
                        <MiniBtn>{s.off ? "" : "E"}</MiniBtn>
                      </BtnBox>
                      <FaderArea>
                        <FaderTrack>
                          <Scale />
                          <Handle style={{ top: s.top }} $a={s.h.a} $b={s.h.b} $c={s.h.c} $d={s.h.d} $edge={s.h.edge} $line={s.h.line} />
                        </FaderTrack>
                        <Meter>
                          {s.peak !== undefined && <Peak style={{ top: s.peak }} />}
                        </Meter>
                      </FaderArea>
                      <ValueRow $sel={s.sel}>
                        <ValMain>{s.v}</ValMain>
                        <ValPeak>{s.p}</ValPeak>
                      </ValueRow>
                      <BtnBox $h={30} $mt={2}>
                        <MiniBtn>R</MiniBtn>
                        <MiniBtn>W</MiniBtn>
                        <MiniBtn>{(s.mon || s.sel) && <Glyph d={G.speaker} w={7} h={7} color="#0c1216" />}</MiniBtn>
                        <MiniBtn $red={s.rec}>{(s.mon || s.sel) && <Glyph d={G.rec} w={8} h={8} color="#0c1216" />}</MiniBtn>
                      </BtnBox>
                      <LabelRow $line={s.line} $red={s.red}>
                        {s.nolink ? <span /> : <LinkMark single={s.single} />}
                        <span>{s.n}</span>
                      </LabelRow>
                      <NameCell $c={s.c} $two={s.name.includes("\n")}>{s.name}</NameCell>
                    </Strip>
                  ), k => <div key={k} />)}
                </Strips>
                <HScroll />
              </MixerPanel>
            </CenterCol>
            <RightCol>
              <RTabs>
                <RTab>Control Room</RTab>
                <RTab $on>Vumètre</RTab>
              </RTabs>
              <VuPanel>
                <MasterField>Master</MasterField>
                <VuBtnRow $mt={12} $h={12} $gap={1}>
                  <VuBtn $w={57} $bright>Digital Scale</VuBtn>
                  <VuBtn $w={57} $bright $faint>-18 dBFS</VuBtn>
                </VuBtnRow>
                <VuBtnRow $mt={4} $h={9} $gap={3} $ml={1}>
                  <VuBtn $w={55} $dark>
                    AES1
                    <Cursor>
                      <svg width="9" height="13" viewBox="0 0 9 13">
                        <path d="M1 1v9.5l2.3-2 1.6 3.6 1.5-.7-1.6-3.5H8z" fill="#fff" stroke="#222" strokeWidth=".6" />
                      </svg>
                    </Cursor>
                  </VuBtn>
                  <VuBtn $w={55} $dark><Glyph d="M1 2h1v6H1zM6 2v6L3 5zM9.5 2v6L6.5 5z" w={9} h={7} /></VuBtn>
                </VuBtnRow>
                <ScaleArea>
                  <VuTicks />
                  <MeterBox />
                  {vuScale.map(([n, y]) => (
                    <React.Fragment key={n}>
                      <ScaleNum $left style={{ top: y - 170 }}>{n}</ScaleNum>
                      <ScaleNum style={{ top: y - 170 }}>{n}</ScaleNum>
                    </React.Fragment>
                  ))}
                </ScaleArea>
                <RmsBox>
                  <span>Max RMS</span><span>Crête max</span>
                  <span>-25.3</span><span>0.2</span>
                </RmsBox>
              </VuPanel>
              <RBottomTabs>
                <RBottomTab $on>Maître</RBottomTab>
                <RBottomTab>Loudness</RBottomTab>
              </RBottomTabs>
            </RightCol>
          </MixColumns>
        </MixInner>
      </MixWindow>
    </Desktop>
  );
}
